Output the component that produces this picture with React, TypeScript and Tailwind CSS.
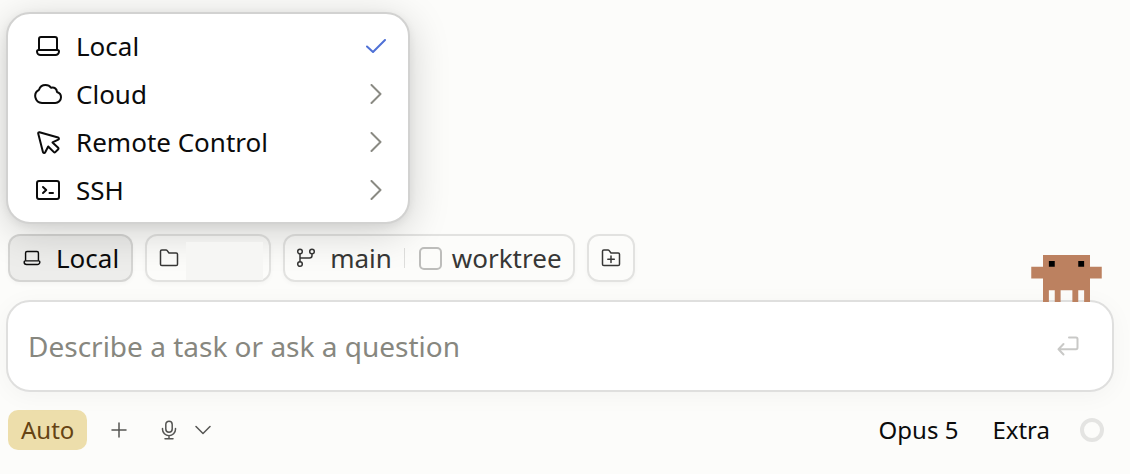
import type { ReactNode } from "react";

type IconProps = { className?: string };

function Svg({ className, box, width = 2, children }: IconProps & { box: string; width?: number; children: ReactNode }) {
  return (
    <svg
      className={className}
      viewBox={box}
      fill="none"
      stroke="currentColor"
      strokeWidth={width}
      strokeLinecap="round"
      strokeLinejoin="round"
      aria-hidden="true"
    >
      {children}
    </svg>
  );
}

function LaptopIcon({ className }: IconProps) {
  return (
    <Svg className={className} box="0 0 28 28">
      <path d="M5 17V7a2 2 0 0 1 2-2h14a2 2 0 0 1 2 2v10" />
      <path d="M4.500 18h19c.8 0 1.500.6 1.500 1.500A3.500 3.500 0 0 1 21.500 23h-15A3.500 3.500 0 0 1 3 19.500c0-.9.700-1.500 1.500-1.500z" />
    </Svg>
  );
}

function CloudIcon({ className }: IconProps) {
  return (
    <Svg className={className} box="0 0 28 28">
      <path d="M8 23a7 7 0 0 1-3-13.2C6 6.800 8.500 5 11.500 5c2.400 0 4.300 1 5.500 2.800C20.500 6.800 22.800 9 23 12c2.400.8 4 2.800 4 5.200 0 3.200-2.600 5.800-5.800 5.800z" />
    </Svg>
  );
}

function CursorIcon({ className }: IconProps) {
  return (
    <Svg className={className} box="0 0 28 28">
      <path d="M4.200 5.500 9 24.200c.3 1 1.600 1.200 2.100.3l3.100-6 5.700 5.600c.4.4 1 .4 1.400 0l2.900-2.900c.4-.4.4-1 0-1.400l-5.700-5.400 5.800-2.800c.9-.5.8-1.800-.2-2.100L5.500 4.200c-.8-.2-1.500.5-1.300 1.300z" />
    </Svg>
  );
}

function TerminalIcon({ className }: IconProps) {
  return (
    <Svg className={className} box="0 0 28 28">
      <rect x="3" y="5" width="22" height="18" rx="2" />
      <path d="m9 11 3.200 3L9 17M15.500 17H19" />
    </Svg>
  );
}

function FolderIcon({ className, plus }: IconProps & { plus?: boolean }) {
  return (
    <Svg className={className} box="0 0 20 20" width={1.5}>
      <path d="M1.500 16.200V3.300c0-.8.500-1.300 1.300-1.300H7c.5 0 .9.200 1.200.6L10 5h7.200c.8 0 1.300.5 1.300 1.300v9.900c0 .8-.5 1.300-1.300 1.300H2.800c-.8 0-1.300-.5-1.300-1.300z" />
      {plus && <path d="M10 8v6.500M6.800 11.200h6.500" />}
    </Svg>
  );
}

function BranchIcon({ className }: IconProps) {
  return (
    <Svg className={className} box="0 0 20 20" width={1.5}>
      <circle cx="4" cy="3.500" r="2.300" />
      <circle cx="16" cy="3.500" r="2.300" />
      <circle cx="4" cy="16" r="2.300" />
      <path d="M4 6v7.500M4 10h9.500c1.500 0 2.500-1 2.500-2.500V6" />
    </Svg>
  );
}

function ChevronRight({ className }: IconProps) {
  return (
    <Svg className={className} box="0 0 12 20">
      <path d="m1.500 1 9 9-9 9" />
    </Svg>
  );
}

function CheckIcon({ className }: IconProps) {
  return (
    <Svg className={className} box="0 0 20 14">
      <path d="m1 7.500 6 5.500L19 1" />
    </Svg>
  );
}

function ReturnIcon({ className }: IconProps) {
  return (
    <Svg className={className} box="0 0 22 20">
      <path d="M12 1.500h7c.8 0 1.500.6 1.500 1.500v8.500c0 1-.7 1.700-1.500 1.700H1.500M6.500 8l-5 5.200 5 5.300" />
    </Svg>
  );
}

function MicIcon({ className }: IconProps) {
  return (
    <Svg className={className} box="0 0 16 20" width={1.5}>
      <rect x="4.800" y="1.200" width="6.400" height="11" rx="3.200" />
      <path d="M1.500 8.500v.7a6.500 6.500 0 0 0 13 0v-.7M8 15.700V18.500M4 18.700h8" />
    </Svg>
  );
}

function Mascot({ className }: IconProps) {
  return (
    <svg className={className} viewBox="0 0 12 8" aria-hidden="true">
      <path
        fill="#bc8160"
        d="M2 0h8v2h2v2h-2v4H9V6H8v2H7V6H5v2H4V6H3v2H2V4H0V2h2z"
      />
      <path fill="#000" d="M3 1h1v1H3zM8 1h1v1H8z" />
    </svg>
  );
}

const environments = [
  { label: "Local", Icon: LaptopIcon, selected: true },
  { label: "Cloud", Icon: CloudIcon, selected: false },
  { label: "Remote Control", Icon: CursorIcon, selected: false },
  { label: "SSH", Icon: TerminalIcon, selected: false },
];

const chip =
  "flex h-12 items-center rounded-xl border-2 border-black/10 shadow-[0_2px_4px_rgba(0,0,0,0.03)]";

export default function App() {
  return (
    <main className="bg-[#fcfcfa] px-1.5 pt-3 pb-6 font-['Noto_Sans',sans-serif] text-[26px] leading-8 text-[#0b0b0b]">
      <div
        role="menu"
        aria-label="Environment"
        className="relative z-10 w-[404px] rounded-3xl border-2 border-[#d2d2d1] bg-white bg-clip-padding py-2 shadow-[0_8px_40px_rgba(0,0,0,0.18),0_2px_8px_rgba(0,0,0,0.06)]"
      >
        {environments.map(({ label, Icon, selected }) => (
          <button
            key={label}
            type="button"
            role="menuitemradio"
            aria-checked={selected}
            className="flex h-12 w-full items-center gap-3.5 pr-[22px] pl-[26px] text-left"
          >
            <Icon className="size-7 shrink-0" />
            <span className="flex-1">{label}</span>
            {selected ? (
              <CheckIcon className="h-3.5 w-5 text-[#4f71d6]" />
            ) : (
              <span className="flex w-5 justify-center">
                <ChevronRight className="h-5 w-3 text-[#8a8a83]" />
              </span>
            )}
          </button>
        ))}
      </div>

      <div className="mt-2.5 flex gap-3 pl-0.5 text-[#373736]">
        <button type="button" className={`${chip} gap-3.5 bg-black/6 px-3 text-[#0b0b0b]`}>
          <LaptopIcon className="size-5" />
          Local
        </button>
        <button type="button" aria-label="Folder" className={`${chip} w-[126px] gap-[7px] pr-1.5 pl-3`}>
          <FolderIcon className="size-5 shrink-0" />
          <span className="relative z-20 h-[38px] flex-1 self-end bg-[#f6f6f4]" />
        </button>
        <div className={`${chip} px-[11px]`}>
          <button type="button" className="flex items-center gap-3.5">
            <BranchIcon className="size-5" />
            main
          </button>
          <span className="mr-3.5 ml-3 h-5 w-px bg-[#dededc]" />
          <label className="flex items-center gap-2.5">
            <input
              type="checkbox"
              className="size-[23px] appearance-none rounded-[5px] border-2 border-[#bdbdbb]"
            />
            worktree
          </label>
        </div>
        <button type="button" aria-label="Add folder" className={`${chip} w-12 justify-center`}>
          <FolderIcon plus className="size-5" />
        </button>
      </div>

      <form
        className="relative mt-[18px] mr-2.5 flex h-[92px] items-center rounded-3xl border-2 border-[#dfdfde] bg-white pr-[33px] pl-5 shadow-[0_4px_24px_rgba(0,0,0,0.04)]"
        onSubmit={(event) => event.preventDefault()}
      >
        <input
          type="text"
          aria-label="Task"
          placeholder="Describe a task or ask a question"
          className="min-w-0 flex-1 text-[28px] leading-10 outline-none placeholder:text-[#87877f]"
        />
        <button type="submit" aria-label="Send" className="text-[#c9c9c7]">
          <ReturnIcon className="h-5 w-[22px]" />
        </button>
        <Mascot className="absolute right-2.5 bottom-full h-[47px] w-[71px]" />
      </form>

      <div className="mt-[18px] mr-2.5 flex h-10 items-center pl-0.5 text-2xl">
        <button type="button" className="h-10 rounded-[10px] bg-[#eddeab] px-[13px] text-[#654313]">
          Auto
        </button>
        <button type="button" aria-label="Attach" className="ml-6 text-[#555553]">
          <Svg className="size-4" box="0 0 16 16" width={1.5}>
            <path d="M8 1v14M1 8h14" />
          </Svg>
        </button>
        <button type="button" aria-label="Dictate" className="ml-[34px] text-[#555553]">
          <MicIcon className="h-5 w-4" />
        </button>
        <button type="button" aria-label="Dictation options" className="ml-[18px] text-[#555553]">
          <Svg className="h-2.5 w-4" box="0 0 16 10" width={1.5}>
            <path d="m1 1.500 7 7 7-7" />
          </Svg>
        </button>
        <button type="button" className="ml-auto">
          Opus 5
        </button>
        <button type="button" className="ml-[34px]">
          Extra
        </button>
        <button
          type="button"
          aria-label="Context usage"
          className="mr-2.5 ml-[30px] size-6 rounded-full border-4 border-[#e4e4e2]"
        />
      </div>
    </main>
  );
}
